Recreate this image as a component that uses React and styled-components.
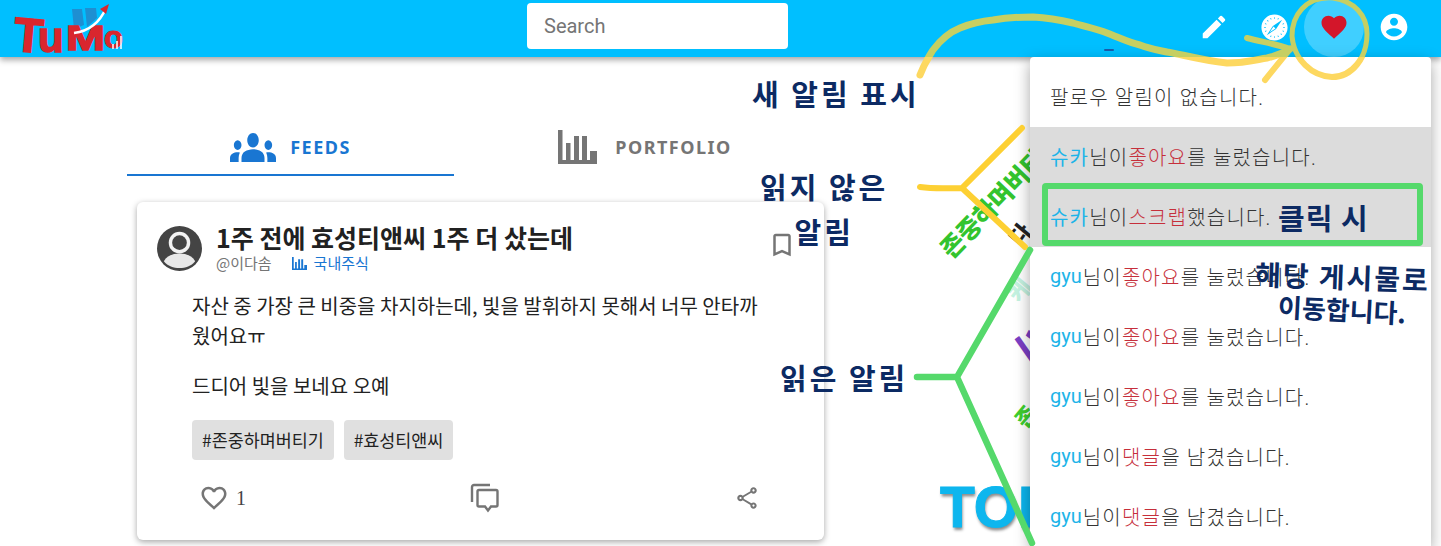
import React from "react";
import styled, { createGlobalStyle } from "styled-components";
import { FaSafari } from "react-icons/fa";

const Global = createGlobalStyle`
  html, body { margin: 0; padding: 0; background: #fff; height: 546px; overflow: hidden; }
  body { font-family: Roboto, "Noto Sans CJK KR", sans-serif; color: #333; }
`;
const KR = `"Noto Sans CJK KR", Roboto, sans-serif`;

const Page = styled.div`position: relative; width: 1441px; height: 546px; overflow: hidden; background: #fff;`;
const Header = styled.header`
  position: relative; z-index: 2; height: 57px; background: #00bfff; display: grid;
  grid-template-columns: 527px 261px 1fr; align-items: start; box-shadow: 0 3px 6px rgba(0,0,0,.35);
`;
const LogoBox = styled.div`height: 57px;`;
const Search = styled.div`
  height: 46px; margin-top: 3px; background: #fff; border-radius: 4px; box-sizing: border-box;
  padding: 0 17px; display: flex; align-items: center; font-size: 20px; color: #757575;
`;
const Actions = styled.div`display: flex; justify-content: flex-end; align-items: center; height: 54px; padding-right: 17px;`;
const ActionButton = styled.div`
  width: 60px; height: 60px; border-radius: 50%; flex: none;
  display: flex; align-items: center; justify-content: center;
  background: ${p => p.$active ? "rgba(255,255,255,.25)" : "transparent"};
`;
const Main = styled.main`width: 654px; margin-left: 127px;`;
const Tabs = styled.div`display: grid; grid-template-columns: 1fr 1fr; height: 120px; padding-top: 57px; box-sizing: border-box;`;
const Tab = styled.div`
  display: flex; align-items: center; justify-content: center; gap: ${p => p.$active ? 14 : 18}px; height: 62px; box-sizing: border-box;
  border-bottom: 2px solid ${p => p.$active ? "#1976d2" : "transparent"};
  color: ${p => p.$active ? "#1976d2" : "#757575"};
  font: 700 18px "Noto Sans", Roboto, sans-serif; letter-spacing: 1.5px;
  padding: 6px 0 0 ${p => p.$active ? 0 : 55}px;
`;
const Card = styled.article`
  margin: 25px 0 0 10px; width: 687px; height: 338px; background: #fff; border-radius: 6px; box-sizing: border-box;
  box-shadow: 0 2px 6px rgba(0,0,0,.35); padding: 20px 27px 0 20px; font-family: ${KR};
`;
const CardHead = styled.div`display: flex; align-items: flex-start; height: 49px;`;
const AvatarBox = styled.div`margin-top: 4px; height: 45px;`;
const Meta = styled.div`flex: 1; margin-left: 14px; min-width: 0;`;
const Title = styled.h2`margin: 0; font: 700 25px/31px ${KR}; color: #212121;`;
const Sub = styled.div`display: flex; align-items: center; font-size: 15px; line-height: 20px; color: #757575;`;
const Category = styled.span`display: inline-flex; align-items: center; color: #1976d2; margin-left: 20px; gap: 7px;`;
const BookmarkBox = styled.div`margin-top: 8px; height: 30px;`;
const Body = styled.div`padding: 20px 35px 0 35px; font-size: 20px; line-height: 30px; color: #222;`;
const Para = styled.p`margin: 0 0 20px;`;
const Tags = styled.div`display: flex; gap: 10px; padding-left: 35px; margin-top: -1px;`;
const Tag = styled.span`
  height: 40px; line-height: 40px; padding: 0 10px; border-radius: 4px; background: #e0e0e0; font-size: 17.4px; color: #222;
`;
const CardFoot = styled.div`display: grid; grid-template-columns: 1fr 1fr 1fr; align-items: center; padding: 22px 37px 0 42px;`;
const FootCell = styled.div`display: flex; align-items: center; justify-content: ${p => p.$align || "flex-start"}; gap: 7px; margin-left: ${p => p.$shift || 0}px;`;
const Count = styled.span`font: 400 20px "Liberation Serif", serif; color: #444;`;

const Menu = styled.aside`
  position: absolute; z-index: 3; left: 1030px; top: 57px; width: 401px; height: 489px; padding-top: 10px; box-sizing: border-box;
  background: #fff; border-radius: 4px 4px 0 0; box-shadow: 0 5px 15px rgba(0,0,0,.35); overflow: hidden;
`;
const MenuItem = styled.div`
  height: 60px; padding: 0 20px 2px; box-sizing: border-box; display: flex; align-items: center; font-size: 20px; font-weight: 300;
  font-family: Roboto, ${KR}; color: #333; white-space: pre; background: ${p => p.$unread ? "#dcdcdc" : "transparent"}; letter-spacing: 1.2px;
`;
const Who = styled.span`color: #1eb4e8; font-weight: 400; letter-spacing: ${p => p.$latin ? 0 : 1.2}px; margin-right: ${p => p.$latin ? 1 : 0}px;`;
const Act = styled.span`color: #c62f3b;`;

const Behind = styled.div`position: absolute; z-index: 1; white-space: nowrap; font-family: ${KR}; font-weight: 900;
  left: ${p => p.$x}px; top: ${p => p.$y}px; font-size: ${p => p.$s}px; line-height: 1; color: ${p => p.$c}; transform: rotate(${p => p.$r || 0}deg); transform-origin: left center;`;
const TopWord = styled.div`position: absolute; z-index: 1; left: 940px; top: 476px; font: 700 57px/1.1 "Liberation Sans", sans-serif;
  color: #0db6ee; text-shadow: 1px 3px 3px rgba(0,0,0,.45); white-space: nowrap; -webkit-text-stroke: 1px #0db6ee;`;
const Strokes = styled.svg`position: absolute; inset: 0; z-index: 4; pointer-events: none;`;
const Note = styled.div`
  position: absolute; z-index: 5; white-space: nowrap; text-align: center; font-family: ${KR}; font-weight: 700; color: #0c2a63;
  left: ${p => p.$x}px; top: ${p => p.$y}px; font-size: ${p => p.$s || 29}px; line-height: ${p => p.$lh || 1.2};
  letter-spacing: ${p => p.$ls || 0}px; transform: rotate(${p => p.$r || 0}deg);
`;

const Icon = ({ d, size = 24, color = "#fff", vb = 24 }) => (
  <svg width={size} height={size} viewBox={`0 0 ${vb} ${vb}`} fill={color} aria-hidden="true"><path d={d} /></svg>
);
const P = {
  edit: "M3 17.25V21h3.75L17.81 9.94l-3.75-3.75L3 17.25zM20.71 7.04c.39-.39.39-1.02 0-1.41l-2.34-2.34a.9959.9959 0 00-1.41 0l-1.83 1.83 3.75 3.75 1.83-1.83z",
  heart: "M12 21.35l-1.45-1.32C5.4 15.36 2 12.28 2 8.5 2 5.42 4.42 3 7.5 3c1.74 0 3.41.81 4.5 2.09C13.09 3.81 14.76 3 16.5 3 19.58 3 22 5.42 22 8.5c0 3.78-3.4 6.86-8.55 11.54L12 21.35z",
  account: "M12 2C6.48 2 2 6.48 2 12s4.48 10 10 10 10-4.48 10-10S17.52 2 12 2zm0 3c1.66 0 3 1.34 3 3s-1.34 3-3 3-3-1.34-3-3 1.34-3 3-3zm0 14.2c-2.5 0-4.71-1.28-6-3.22.03-1.99 4-3.08 6-3.08 1.99 0 5.97 1.09 6 3.08-1.29 1.94-3.5 3.22-6 3.22z",
  groups: "M12 12.75c1.63 0 3.07.39 4.24.9 1.08.48 1.76 1.56 1.76 2.73V18H6v-1.61c0-1.18.68-2.26 1.76-2.73 1.17-.52 2.61-.91 4.24-.91zM4 13c1.1 0 2-.9 2-2s-.9-2-2-2-2 .9-2 2 .9 2 2 2zm1.13 1.1c-.37-.06-.74-.1-1.13-.1-.99 0-1.93.21-2.78.58C.48 14.9 0 15.62 0 16.43V18h4.5v-1.61c0-.83.23-1.61.63-2.29zM20 13c1.1 0 2-.9 2-2s-.9-2-2-2-2 .9-2 2 .9 2 2 2zm4 3.43c0-.81-.48-1.53-1.22-1.85-.85-.37-1.79-.58-2.78-.58-.39 0-.76.04-1.13.1.4.68.63 1.46.63 2.29V18H24v-1.57zM12 6c1.66 0 3 1.34 3 3s-1.34 3-3 3-3-1.34-3-3 1.34-3 3-3z",
  bookmark: "M17 3H7c-1.1 0-2 .9-2 2v16l7-3 7 3V5c0-1.1-.9-2-2-2zm0 15l-5-2.18L7 18V5h10v13z",
  heartO: "M16.5 3c-1.74 0-3.41.81-4.5 2.09C10.91 3.81 9.24 3 7.5 3 4.42 3 2 5.42 2 8.5c0 3.78 3.4 6.86 8.55 11.54L12 21.35l1.45-1.32C18.6 15.36 22 12.28 22 8.5 22 5.42 19.58 3 16.5 3zm-4.4 15.55l-.1.1-.1-.1C7.14 14.24 4 11.39 4 8.5 4 6.5 5.5 5 7.5 5c1.54 0 3.04.99 3.57 2.36h1.87C13.46 5.99 14.96 5 16.5 5c2 0 3.5 1.5 3.5 3.5 0 2.89-3.14 5.74-7.9 10.05z",
  share: "M18 16.08c-.76 0-1.44.3-1.96.77L8.91 12.7c.05-.23.09-.46.09-.7s-.04-.47-.09-.7l7.05-4.11c.54.5 1.25.81 2.04.81 1.66 0 3-1.34 3-3s-1.34-3-3-3-3 1.34-3 3c0 .24.04.47.09.7L8.04 9.81C7.5 9.31 6.79 9 6 9c-1.66 0-3 1.34-3 3s1.34 3 3 3c.79 0 1.5-.31 2.04-.81l7.12 4.16c-.05.21-.08.43-.08.65 0 1.61 1.31 2.92 2.92 2.92s2.92-1.31 2.92-2.92-1.31-2.92-2.92-2.92zM18 4c.55 0 1 .45 1 1s-.45 1-1 1-1-.45-1-1 .45-1 1-1zM6 13c-.55 0-1-.45-1-1s.45-1 1-1 1 .45 1 1-.45 1-1 1zm12 7.02c-.55 0-1-.45-1-1s.45-1 1-1 1 .45 1 1-.45 1-1 1z",
};

const GroupsIcon = () => (
  <svg width="46" height="29" viewBox="0 6 24 12" preserveAspectRatio="none" fill="#1976d2" aria-hidden="true"><path d={P.groups} /></svg>
);
const Bars = ({ w, h, color }) => (
  <svg width={w} height={h} viewBox="0 0 39 34" fill={color} aria-hidden="true">
    <path d="M0 0h4.500v30H8V13h4.500v17H16V6h5v24h3V6h5v24h3V21h7v13H0z" />
  </svg>
);

const letter = { fontFamily: "Liberation Sans, sans-serif", fontWeight: 700, fill: "#d9262e", stroke: "#d9262e" };
const Logo = () => (
  <svg width="130" height="72" viewBox="0 0 130 72" aria-label="TuMo">
    <path d="M72 9h10l2 16-10 4zM85 8h11l1 10-10 9z" fill="#1e8fd2" />
    <text {...letter} x="14" y="52" fontSize="48" strokeWidth="1.500" transform="rotate(5 30 35)">T</text>
    <text {...letter} x="38" y="52" fontSize="42" strokeWidth="1.500">u</text>
    <text {...letter} x="66" y="50" fontSize="35" strokeWidth="1.500" textLength="39" lengthAdjust="spacingAndGlyphs">M</text>
    <text {...letter} x="104" y="48" fontSize="31" strokeWidth="1">o</text>
    <path d="M74 33C90 31 100 22 106 8" fill="none" stroke="#fff" strokeWidth="2.500" />
    <path d="M100 9L109 4L106 14z" fill="#d9262e" />
    <path d="M113 49v-5M117 49v-8M121 49V36" stroke="#fff" strokeWidth="1.500" />
  </svg>
);

const Avatar = () => (
  <svg width="45" height="45" viewBox="0 0 46 46" aria-hidden="true">
    <circle cx="23" cy="23" r="23" fill="#444" />
    <circle cx="23" cy="17" r="11" fill="#f2f2f2" />
    <circle cx="23" cy="17" r="7.500" fill="#444" />
    <path d="M7 36c3-6 10-8 16-8s13 2 16 8c-4 5-10 7-16 7s-12-2-16-7z" fill="#e8e8e8" />
  </svg>
);
const CommentIcon = () => (
  <svg width="30" height="32" viewBox="0 0 30 32" fill="none" stroke="#757575" strokeWidth="2.400" aria-hidden="true">
    <path d="M20 3H4a2 2 0 0 0-2 2v15" />
    <path d="M9 8h17a1.500 1.500 0 0 1 1.500 1.500V23a1.500 1.500 0 0 1-1.500 1.500h-5l-3 4-3-4H9A1.500 1.500 0 0 1 7.500 23V9.500A1.500 1.500 0 0 1 9 8z" />
  </svg>
);

const items = [
  ["슈카", "스크랩", "했습니다."],
  ["gyu", "좋아요", "를 눌렀습니다."],
  ["gyu", "좋아요", "를 눌렀습니다."],
  ["gyu", "좋아요", "를 눌렀습니다."],
  ["gyu", "댓글", "을 남겼습니다."],
  ["gyu", "댓글", "을 남겼습니다."],
];

const ringD = "M1333 -2C1305 -4 1292 16 1292 36C1294 60 1312 76 1332 77C1352 77 1367 58 1367 34C1367 15 1354 1 1333 -2Z";
const arrowD = "M920 75C925 62 930 55 933 50C942 38 950 32 960 28C972 23 982 21 993 20C1010 17 1020 17 1033 17C1050 18 1060 20 1073 23C1087 27 1097 29 1107 33C1120 38 1130 43 1140 45C1150 49 1158 50 1167 52C1180 54 1200 60 1227 63C1245 63 1255 60 1267 58C1276 56 1283 53 1290 49";
const headD = "M1247 38C1262 42 1276 44 1290 49L1265 80";

export default function App() {
  return (
    <Page>
      <Global />
      <Header>
        <LogoBox><Logo /></LogoBox>
        <Search>Search</Search>
        <Actions>
          <ActionButton><Icon d={P.edit} size={30} /></ActionButton>
          <ActionButton><FaSafari size={27} color="#fff" /></ActionButton>
          <ActionButton $active><Icon d={P.heart} size={30} color="#d3162a" /></ActionButton>
          <ActionButton><Icon d={P.account} size={32} /></ActionButton>
        </Actions>
      </Header>

      <Main>
        <Tabs>
          <Tab $active><GroupsIcon />FEEDS</Tab>
          <Tab><Bars w={39} h={34} color="#757575" />PORTFOLIO</Tab>
        </Tabs>
        <Card>
          <CardHead>
            <AvatarBox><Avatar /></AvatarBox>
            <Meta>
              <Title>1주 전에 효성티앤씨 1주 더 샀는데</Title>
              <Sub>@이다솜<Category><Bars w={15} h={15} color="#1976d2" />국내주식</Category></Sub>
            </Meta>
            <BookmarkBox><Icon d={P.bookmark} size={30} color="#757575" /></BookmarkBox>
          </CardHead>
          <Body>
            <Para>자산 중 가장 큰 비중을 차지하는데, 빛을 발휘하지 못해서 너무 안타까웠어요ㅠ</Para>
            <Para>드디어 빛을 보네요 오예</Para>
          </Body>
          <Tags><Tag>#존중하며버티기</Tag><Tag>#효성티앤씨</Tag></Tags>
          <CardFoot>
            <FootCell><Icon d={P.heartO} size={30} color="#757575" /><Count>1</Count></FootCell>
            <FootCell $align="center" $shift={10}><CommentIcon /></FootCell>
            <FootCell $align="flex-end"><Icon d={P.share} size={26} color="#757575" /></FootCell>
          </CardFoot>
        </Card>
      </Main>

      <Behind $x={944} $y={240} $s={25} $c="#33c42e" $r={-46}>존중하며버티기</Behind>
      <Behind $x={1012} $y={230} $s={22} $c="#222" $r={-50}>다</Behind>
      <Behind $x={1028} $y={307} $s={42} $c="#7b3fc4" $r={55}>스</Behind>
      <Behind $x={1012} $y={286} $s={24} $c="#c4f2e0" $r={-50}>케</Behind>
      <Behind $x={1018} $y={412} $s={22} $c="#3ecf2e" $r={-50}>존</Behind>
      <TopWord>TOP</TopWord>

      <Menu>
        <MenuItem>팔로우 알림이 없습니다.</MenuItem>
        <MenuItem $unread><Who>슈카</Who>님이<Act>좋아요</Act>를 눌렀습니다.</MenuItem>
        {items.map(([w, a, r], i) => (
          <MenuItem key={i} $unread={i === 0}><Who $latin={w === "gyu"}>{w}</Who>님이<Act>{a}</Act>{r}</MenuItem>
        ))}
      </Menu>

      <Strokes width="1441" height="546" viewBox="0 0 1441 546" fill="none" strokeLinecap="round" strokeLinejoin="round">
        <defs>
          <clipPath id="overHeader"><rect x="0" y="0" width="1441" height="57" /></clipPath>
          <clipPath id="overPage"><rect x="0" y="57" width="1441" height="489" /></clipPath>
        </defs>
        <g clipPath="url(#overHeader)" stroke="#c6cf62">
          <path d={ringD} strokeWidth="5" />
          <path d={arrowD} strokeWidth="7" />
          <path d={headD} strokeWidth="6" />
        </g>
        <g clipPath="url(#overPage)" stroke="#fdd860">
          <path d={ringD} strokeWidth="6" />
          <path d={arrowD} strokeWidth="7" />
          <path d={headD} strokeWidth="6" />
        </g>
        <path d="M1105 50H1113" stroke="#1a5aa8" strokeWidth="2" />
        <path d="M920 187C935 189 945 188 962 188L1022 128M962 188L1025 247" stroke="#fdd033" strokeWidth="6" />
        <path d="M917 377H957L1030 250M957 377L1032 543" stroke="#55d96b" strokeWidth="6.500" />
        <rect x="1045" y="186" width="375" height="57" stroke="#55d96b" strokeWidth="6" rx="1" />
      </Strokes>
      <Note $x={752} $y={76} $ls={3}>새 알림 표시</Note>
      <Note $x={760} $y={164} $lh="45px" $ls={3}>읽지 않은<br />알림</Note>
      <Note $x={780} $y={360} $ls={3}>읽은 알림</Note>
      <Note $x={1278} $y={200} $ls={1}>클릭 시</Note>
      <Note $x={1255} $y={260} $s={28} $r={2} $ls={2}>해당 게시물로</Note>
      <Note $x={1278} $y={293} $s={26} $r={3}>이동합니다.</Note>
    </Page>
  );
}
